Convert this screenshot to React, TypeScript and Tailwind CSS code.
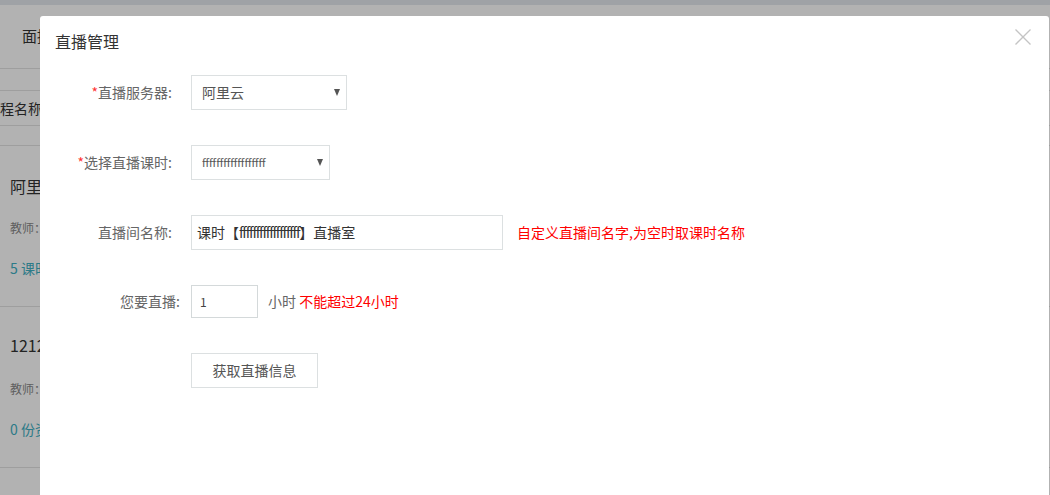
const FONT = { fontFamily: '"Noto Sans CJK SC", "Liberation Sans", sans-serif' };

const FS = 'ffffffffffffffffff';

function Background() {
  return (
    <div className="flex flex-col text-[#333]">
      <div className="h-[5px] bg-[#e4e8ee]" />
      <div className="h-[64px] flex items-center pl-[22px] border-b border-[#e2e2e2] text-[15px]">面授课程</div>
      <div className="h-[22px] border-b border-[#e2e2e2]" />
      <div className="h-[35px] flex items-center border-b border-[#e2e2e2] text-[14px] -ml-[14px]">课程名称</div>
      <div className="h-[20px] border-b border-[#e2e2e2]" />
      <div className="flex flex-col pl-[10px] h-[161px] border-b border-[#e2e2e2]">
        <div className="mt-[28px] text-[16px] leading-[24px]">阿里云直播</div>
        <div className="mt-[22px] text-[12px] text-[#888] leading-[16px]">教师：</div>
        <div className="mt-[22px] text-[14px] text-[#3fb0c3] leading-[20px]">5 课时</div>
      </div>
      <div className="flex flex-col pl-[10px] h-[161px] border-b border-[#e2e2e2]">
        <div className="mt-[26px] text-[16px] leading-[24px]">1212</div>
        <div className="mt-[24px] text-[12px] text-[#888] leading-[16px]">教师：</div>
        <div className="mt-[22px] text-[14px] text-[#3fb0c3] leading-[20px]">0 份资料</div>
      </div>
    </div>
  );
}

function Label({ text, required, width }: { text: string; required?: boolean; width: string }) {
  return (
    <div className={`${width} shrink-0 text-right text-[14px] text-[#666]`}>
      {required && <span className="text-[#f33]">*</span>}
      {text}
    </div>
  );
}

function Select({ value, width, small }: { value: string; width: string; small?: boolean }) {
  return (
    <div className={`${width} h-[35px] flex items-center justify-between border border-[#dce0e1] pl-[10px] pr-[6px] text-[#555]`}>
      <span className={small ? 'text-[11px]' : 'text-[14px]'}>{value}</span>
      <span className="w-0 h-0 border-l-[3.5px] border-r-[3.5px] border-t-[7px] border-l-transparent border-r-transparent border-t-[#555]" />
    </div>
  );
}

export default function App() {
  return (
    <div className="relative w-[1050px] h-[495px] overflow-hidden bg-white" style={FONT}>
      <Background />
      <div className="absolute inset-0 bg-black/30" />

      <div className="absolute left-[40px] top-[16px] w-[1009px] h-[500px] bg-white rounded-[3px]">
        <div className="h-[50px] flex items-center pl-[15px]">
          <h2 className="text-[16px] text-[#333]">直播管理</h2>
        </div>
        <svg
          className="absolute right-[18px] top-[13px] h-[16px] w-[16px] text-[#c4c4c4]"
          viewBox="0 0 16 16"
          fill="none"
          stroke="currentColor"
          strokeWidth={1.3}
        >
          <path d="M0.5 0.5l15 15M15.5 0.5l-15 15" />
        </svg>

        <div className="flex flex-col gap-[35px] pt-[9px]">
          <div className="flex items-center h-[35px] gap-[19px]">
            <Label text="直播服务器:" required width="w-[132px]" />
            <Select value="阿里云" width="w-[156px]" />
          </div>

          <div className="flex items-center h-[35px] gap-[19px]">
            <Label text="选择直播课时:" required width="w-[132px]" />
            <Select value={FS} width="w-[139px]" small />
          </div>

          <div className="flex items-center h-[35px] gap-[19px]">
            <Label text="直播间名称:" width="w-[132px]" />
            <div className="w-[312px] h-[35px] flex items-center border border-[#dce0e1] pl-[5px] text-[14px] text-[#333]">
              课时【<span className="tracking-[-1.2px]">{FS}</span>】直播室
            </div>
            <span className="ml-[-5px] text-[14px] text-[#f00]">自定义直播间名字,为空时取课时名称</span>
          </div>

          <div className="flex items-center h-[33px] gap-[11px]">
            <Label text="您要直播:" width="w-[140px]" />
            <div className="w-[67px] h-[33px] flex items-center border border-[#d4d9da] pl-[8px] text-[12px] text-[#444]">1</div>
            <span className="ml-[-1px] text-[14px] text-[#666]">
              小时 <span className="text-[#f00]">不能超过24小时</span>
            </span>
          </div>

          <div className="flex items-center h-[35px] pl-[151px]">
            <button
              type="button"
              className="w-[127px] h-[35px] border border-[#dce0e1] bg-white text-[14px] text-[#555]"
            >
              获取直播信息
            </button>
          </div>
        </div>
      </div>
    </div>
  );
}
